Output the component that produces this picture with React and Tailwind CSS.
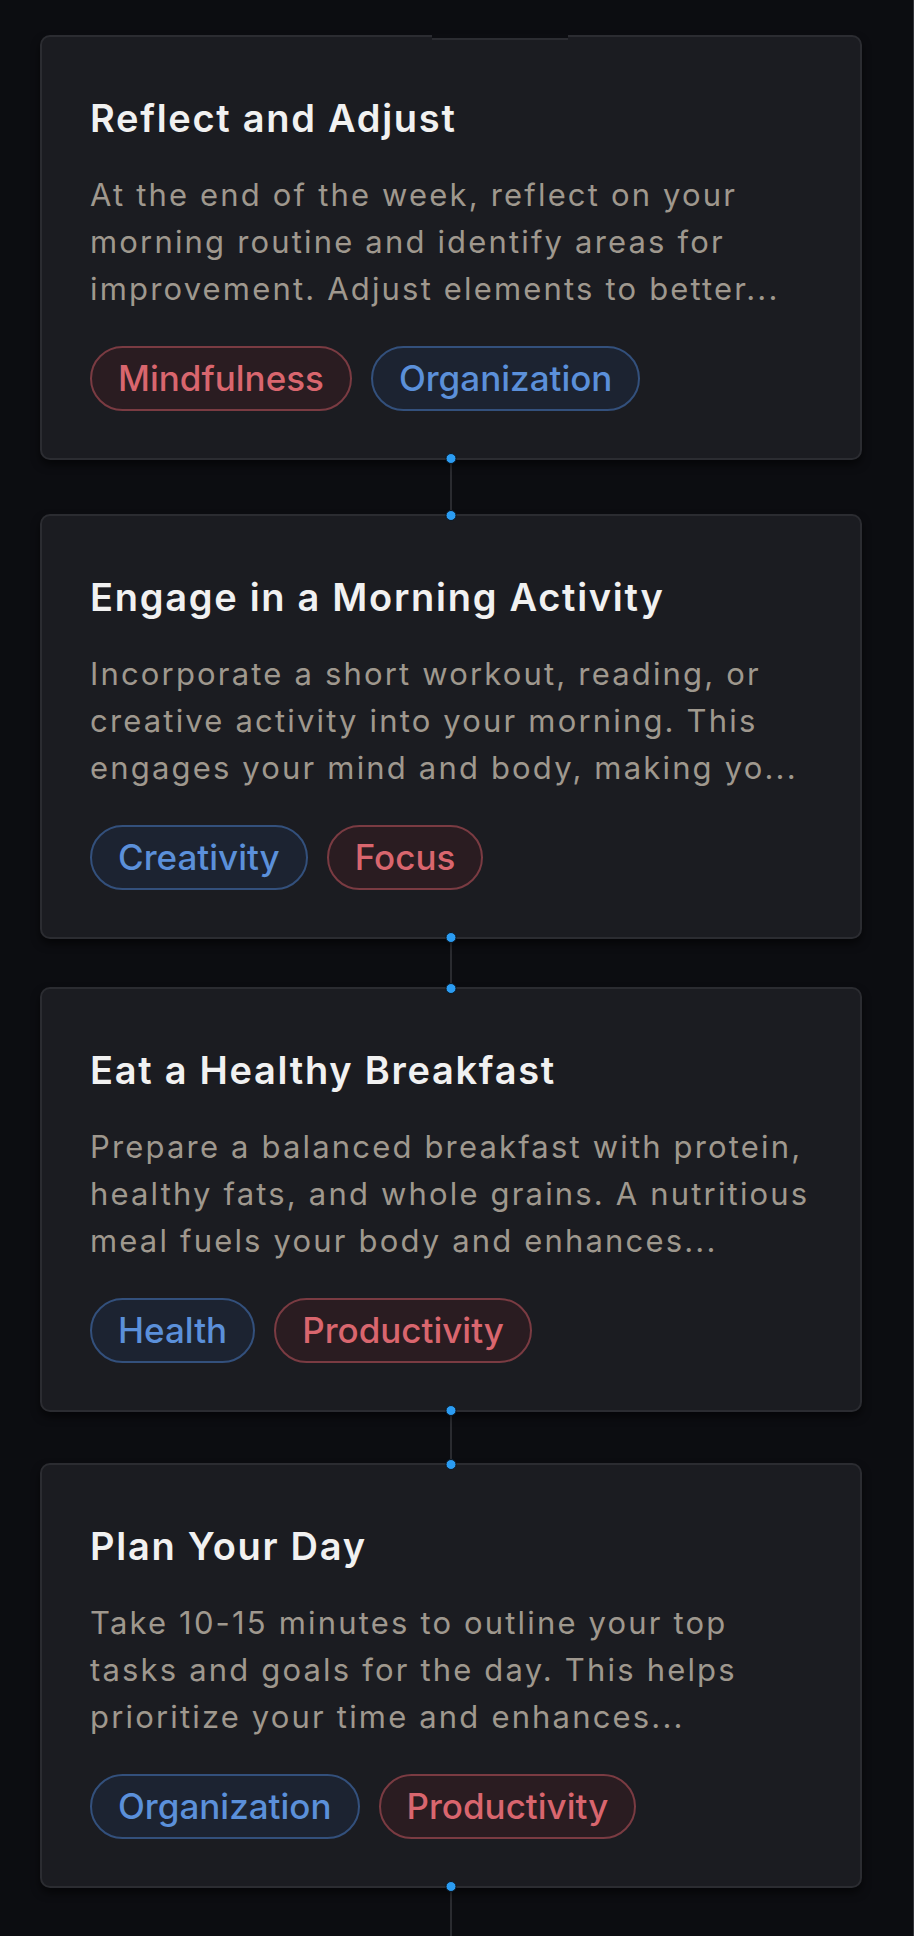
import React from "react";

const cards = [
  {
    title: "Reflect and Adjust",
    desc: [
      "At the end of the week, reflect on your",
      "morning routine and identify areas for",
      "improvement. Adjust elements to better...",
    ],
    tags: [
      { label: "Mindfulness", color: "red" },
      { label: "Organization", color: "blue" },
    ],
  },
  {
    title: "Engage in a Morning Activity",
    desc: [
      "Incorporate a short workout, reading, or",
      "creative activity into your morning. This",
      "engages your mind and body, making yo...",
    ],
    tags: [
      { label: "Creativity", color: "blue" },
      { label: "Focus", color: "red" },
    ],
  },
  {
    title: "Eat a Healthy Breakfast",
    desc: [
      "Prepare a balanced breakfast with protein,",
      "healthy fats, and whole grains. A nutritious",
      "meal fuels your body and enhances...",
    ],
    tags: [
      { label: "Health", color: "blue" },
      { label: "Productivity", color: "red" },
    ],
  },
  {
    title: "Plan Your Day",
    desc: [
      "Take 10-15 minutes to outline your top",
      "tasks and goals for the day. This helps",
      "prioritize your time and enhances...",
    ],
    tags: [
      { label: "Organization", color: "blue" },
      { label: "Productivity", color: "red" },
    ],
  },
];

function Tag({ label, color }) {
  const cls =
    color === "red"
      ? "border-[#7a3b42] bg-[#2a1c21] text-[#d9666e]"
      : "border-[#33507c] bg-[#1c2331] text-[#5b90da]";
  return (
    <span
      className={`flex h-[65px] items-center rounded-full border-2 px-[26px] text-[35px] font-medium ${cls}`}
    >
      {label}
    </span>
  );
}

function Dot({ pos }) {
  const p = pos === "top" ? "-top-[6px]" : "-bottom-[6px]";
  return (
    <span
      className={`absolute left-1/2 ${p} z-10 h-[11px] w-[11px] -translate-x-1/2 rounded-full border border-[#0d1620] bg-[#2b9cf2]`}
    />
  );
}

function Card({ card, first }) {
  return (
    <div className="relative w-[822px] rounded-[10px] border-2 border-[#2b2c31] bg-[#1b1c21] px-[48px] pb-[47px] pt-[58px] shadow-[0_5px_8px_rgba(0,0,0,0.55)]">
      {first ? (
        <span className="absolute -top-[3px] left-[390px] h-[6px] w-[136px] border-b-2 border-[#2b2c31] bg-[#0c0d11]" />
      ) : (
        <Dot pos="top" />
      )}
      <Dot pos="bottom" />
      <h2 className="whitespace-nowrap text-[38px] font-semibold leading-[46px] tracking-[0.045em] text-[#f1f1f1]">
        {card.title}
      </h2>
      <p className="mt-[30px] text-[31px] leading-[47px] tracking-[0.07em] text-[#9f988e]">
        {card.desc.map((line) => (
          <span key={line} className="block whitespace-nowrap">
            {line}
          </span>
        ))}
      </p>
      <div className="mt-[34px] flex gap-[19px]">
        {card.tags.map((t) => (
          <Tag key={t.label} {...t} />
        ))}
      </div>
    </div>
  );
}

function Connector({ h }) {
  return <div className={`w-[2px] bg-[#2a2b30] ${h}`} />;
}

export default function App() {
  const gaps = ["h-[54px]", "h-[48px]", "h-[51px]"];
  return (
    <div
      className="flex min-h-[1936px] border-r border-[#34353a] bg-[#0c0d11] pl-[40px]"
      style={{ fontFamily: "Inter, 'Noto Sans', sans-serif" }}
    >
      <div className="flex w-[822px] flex-col items-center pt-[35px]">
        {cards.map((c, i) => (
          <React.Fragment key={c.title}>
            <Card card={c} first={i === 0} />
            {i < cards.length - 1 ? <Connector h={gaps[i]} /> : null}
          </React.Fragment>
        ))}
        <div className="w-[2px] flex-1 bg-[#2a2b30]" />
      </div>
    </div>
  );
}
